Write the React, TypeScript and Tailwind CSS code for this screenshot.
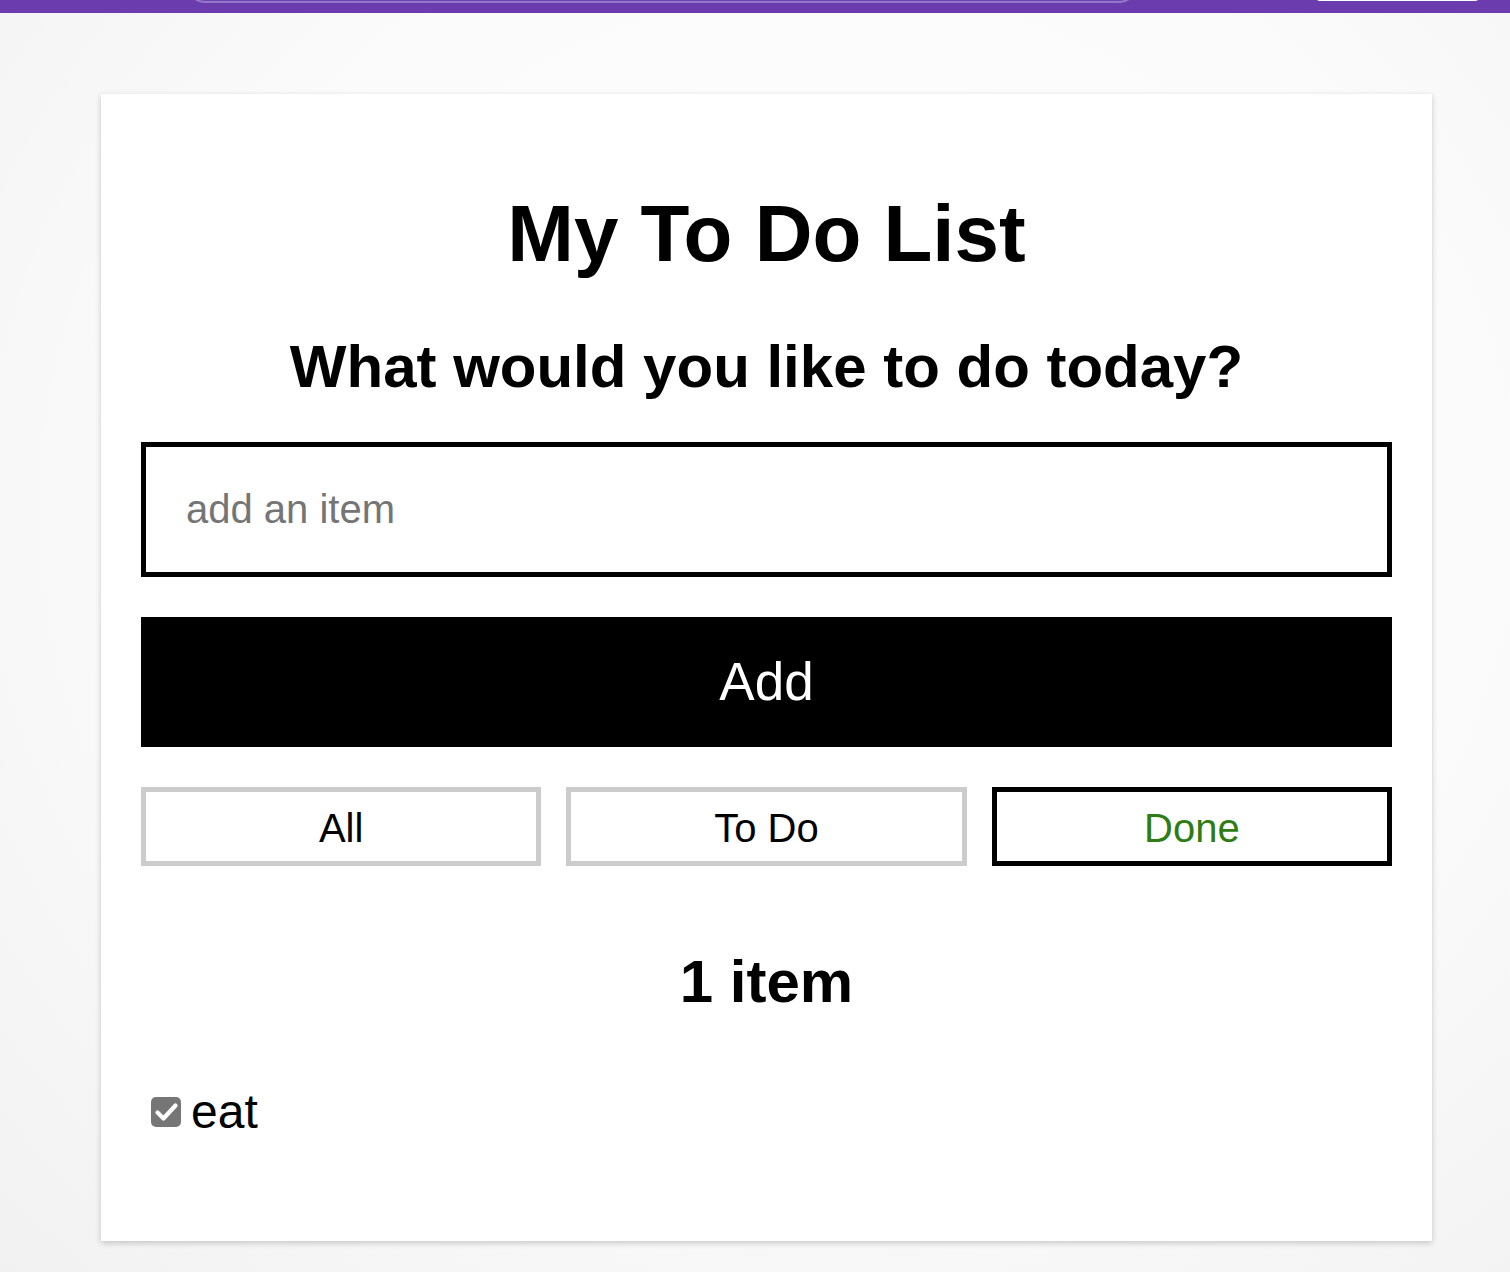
import React from "react";

export default function App() {
  const font = { fontFamily: '"Liberation Sans", Arial, sans-serif' };
  return (
    <div
      className="min-h-[1272px] w-full bg-[radial-gradient(ellipse_at_55%_40%,#fdfdfd_0%,#fbfbfb_55%,#f1f1f1_100%)] text-black"
      style={font}
    >
      {/* top purple bar */}
      <div className="flex h-[13px] items-end overflow-hidden bg-[#6a3cad] pb-[10px]">
        <div className="ml-[187px] h-[40px] w-[950px] shrink-0 rounded-b-[18px] border-b-2 border-l-2 border-r-2 border-[#9278c6] bg-[#6f43b1]" />
        <div className="mb-[2px] ml-[178px] h-[40px] w-[165px] shrink-0 rounded-b-[5px] bg-white" />
      </div>

      <div className="pl-[101px] pt-[81px] pb-[30px]">
        <div className="flex w-[1331px] flex-col bg-white px-[40px] pb-[102px] pt-[94px] shadow-[0_2px_6px_rgba(0,0,0,0.2)]">
          <h1 className="text-center text-[80px] font-bold leading-[92px]">My To Do List</h1>
          <h2 className="mt-[52px] text-center text-[60px] font-bold leading-[69px]">
            What would you like to do today?
          </h2>
          <input
            type="text"
            placeholder="add an item"
            className="mt-[41px] h-[135px] w-full border-[5px] border-black bg-white px-[40px] text-[40px] text-black outline-none placeholder:text-[#757575]"
            style={font}
          />
          <button
            className="mt-[40px] flex h-[130px] w-full items-center justify-center bg-black text-[53px] text-white"
            style={font}
          >
            Add
          </button>
          <div className="mt-[40px] grid grid-cols-3 gap-[25px]">
            <button className="flex h-[79px] items-center justify-center border-[5px] border-[#cccccc] bg-white pt-[3px] text-[40px] text-black" style={font}>
              All
            </button>
            <button className="flex h-[79px] items-center justify-center border-[5px] border-[#cccccc] bg-white pt-[3px] text-[40px] text-black" style={font}>
              To Do
            </button>
            <button className="flex h-[79px] items-center justify-center border-[5px] border-black bg-white pt-[3px] text-[40px] text-[#2e7d14]" style={font}>
              Done
            </button>
          </div>
          <h2 className="mt-[81px] text-center text-[60px] font-bold leading-[69px]">1 item</h2>
          <div className="mt-[68px] flex items-center pl-[10px]">
            <div className="flex h-[30px] w-[30px] items-center justify-center rounded-[5px] bg-[#767676]">
              <svg width="30" height="30" viewBox="0 0 30 30">
                <path d="M6.5 15.5 L12.5 21.5 L24.5 8.5" fill="none" stroke="white" strokeWidth="4.2" strokeLinecap="round" strokeLinejoin="round" />
              </svg>
            </div>
            <span className="ml-[10px] text-[48px] leading-[55px]">eat</span>
          </div>
        </div>
      </div>
    </div>
  );
}
